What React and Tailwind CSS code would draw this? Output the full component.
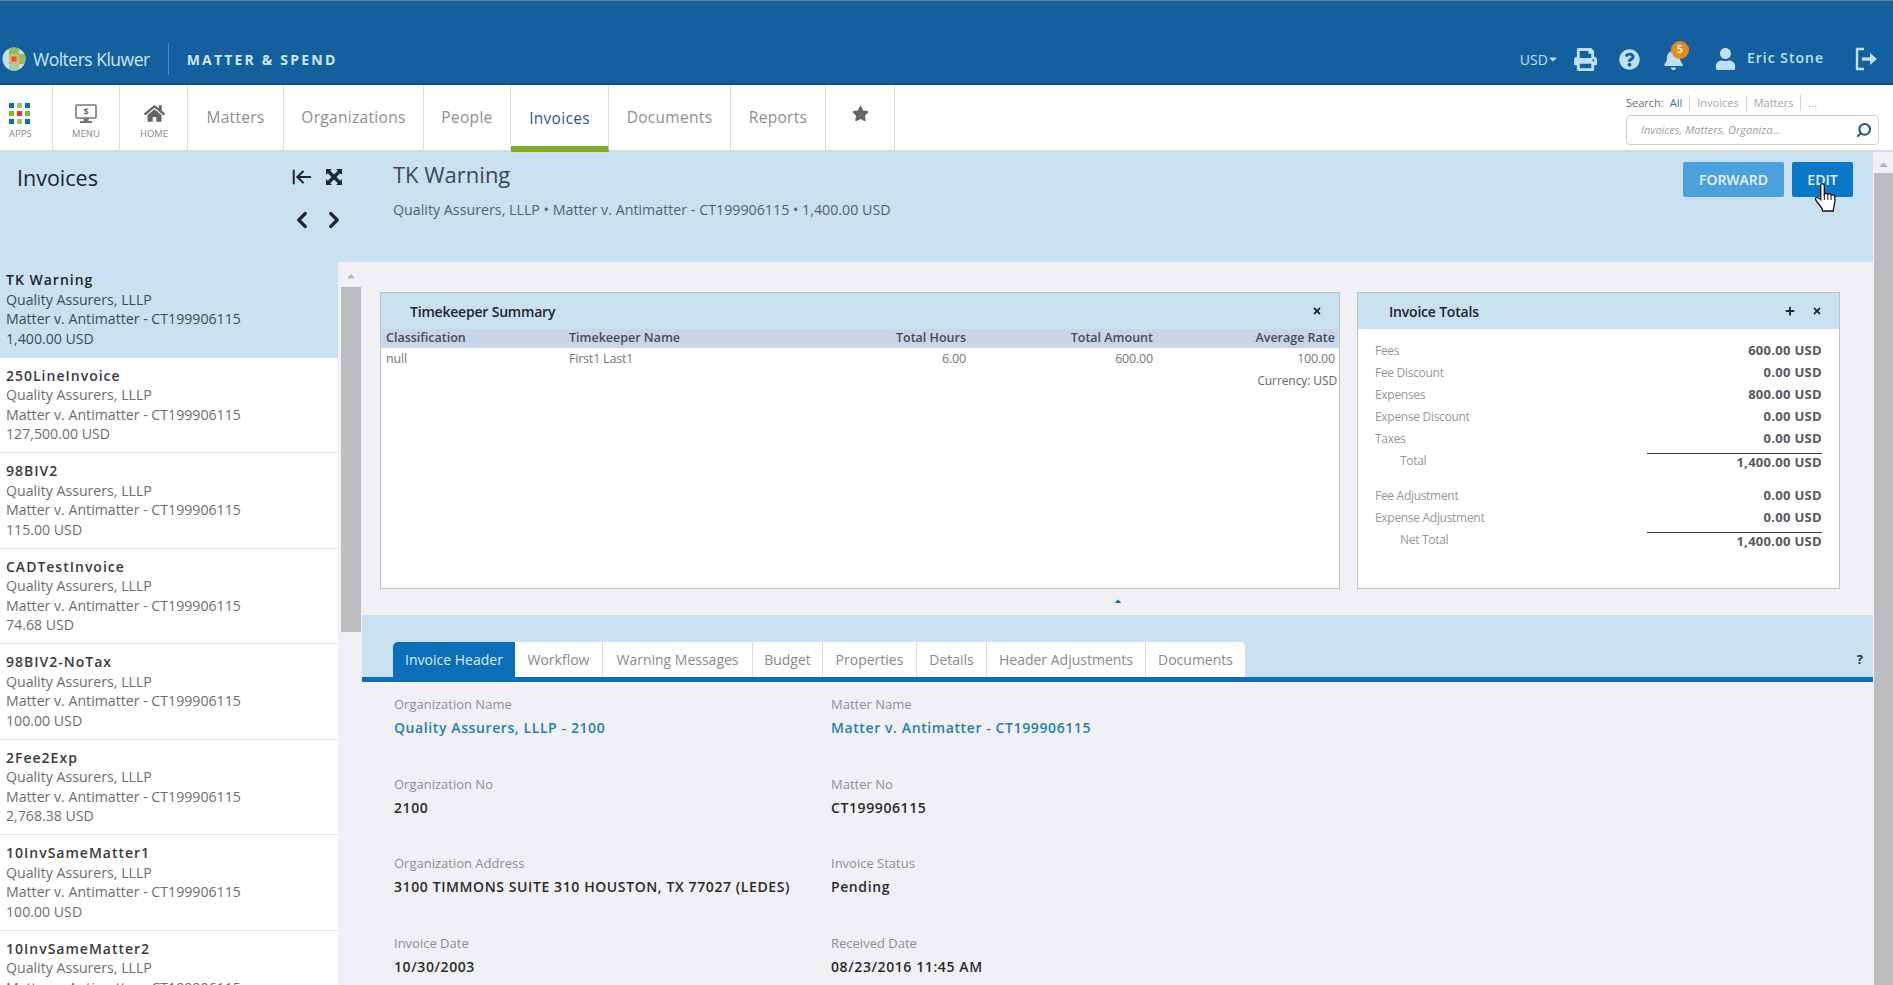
import React from 'react';
import { FaPrint, FaQuestionCircle, FaBell, FaUser, FaHome, FaStar, FaTimes, FaPlus, FaCaretDown, FaCaretUp } from 'react-icons/fa';
import { ChevronLeft, ChevronRight, ArrowLeftToLine, Search } from 'lucide-react';

const FONT = { fontFamily: '"Open Sans", sans-serif' };

const invoices = [
    ['TK Warning', '1,400.00 USD'],
    ['250LineInvoice', '127,500.00 USD'],
    ['98BIV2', '115.00 USD'],
    ['CADTestInvoice', '74.68 USD'],
    ['98BIV2-NoTax', '100.00 USD'],
    ['2Fee2Exp', '2,768.38 USD'],
    ['10InvSameMatter1', '100.00 USD'],
    ['10InvSameMatter2', '100.00 USD'],
];

const navLinks = [
    { label: 'Matters', w: 'w-[96px]' },
    { label: 'Organizations', w: 'w-[140px]' },
    { label: 'People', w: 'w-[87px]' },
    { label: 'Invoices', w: 'w-[98px]', active: true },
    { label: 'Documents', w: 'w-[122px]' },
    { label: 'Reports', w: 'w-[95px]' },
];

const tabs = [
    { label: 'Invoice Header', w: 'w-[122px]', active: true },
    { label: 'Workflow', w: 'w-[88px]' },
    { label: 'Warning Messages', w: 'w-[150px]' },
    { label: 'Budget', w: 'w-[70px]' },
    { label: 'Properties', w: 'w-[94px]' },
    { label: 'Details', w: 'w-[70px]' },
    { label: 'Header Adjustments', w: 'w-[159px]' },
    { label: 'Documents', w: 'w-[100px]' },
];

const fields = [
    ['Organization Name', 'Quality Assurers, LLLP - 2100', true],
    ['Matter Name', 'Matter v. Antimatter - CT199906115', true],
    ['Organization No', '2100'],
    ['Matter No', 'CT199906115'],
    ['Organization Address', '3100 TIMMONS SUITE 310 HOUSTON, TX 77027 (LEDES)'],
    ['Invoice Status', 'Pending'],
    ['Invoice Date', '10/30/2003'],
    ['Received Date', '08/23/2016 11:45 AM'],
];

const Logo = () => (
    <svg width="24" height="24" viewBox="0 0 24 24" className="shrink-0">
        <defs>
            <clipPath id="globe"><circle cx="12" cy="12" r="11.5" /></clipPath>
        </defs>
        <g clipPath="url(#globe)">
            <rect width="24" height="24" fill="#c3e0ea" />
            <rect x="7" y="0" width="10" height="7" fill="#93bb62" />
            <rect x="17" y="7" width="7" height="10" fill="#93bb62" />
            <rect x="7" y="17" width="10" height="7" fill="#a5cfa0" />
            <rect x="7" y="7" width="10" height="10" fill="#d9b66a" />
            <rect x="9.5" y="9.5" width="5" height="5" fill="#e0563c" />
        </g>
    </svg>
);

const AppsIcon = () => {
    const colors = ['bg-[#0a6cb4]', 'bg-[#a9bd62]', 'bg-[#0a6cb4]', 'bg-[#85b52c]', 'bg-[#e2322a]', 'bg-[#85b52c]', 'bg-[#0a6cb4]', 'bg-[#a9bd62]', 'bg-[#0a6cb4]'];
    return (
        <div className="grid grid-cols-3 gap-[3px] w-[21px] h-[21px]">
            {colors.map((c, i) => <span key={i} className={`${c} block w-[5px] h-[5px]`} />)}
        </div>
    );
};

const MenuIcon = () => (
    <svg width="22" height="20" viewBox="0 0 22 20">
        <rect x="1" y="1" width="20" height="13" rx="1" fill="#fff" stroke="#777" strokeWidth="1.6" />
        <rect x="8.5" y="14" width="5" height="3" fill="#777" />
        <rect x="5" y="17" width="12" height="2" fill="#777" />
        <text x="11" y="11" textAnchor="middle" fontSize="9" fontWeight="700" fill="#666" fontFamily="Open Sans, sans-serif">$</text>
    </svg>
);

const LogoutIcon = () => (
    <svg width="24" height="24" viewBox="0 0 24 24" fill="none" stroke="#bfe0f4" strokeWidth="2.4">
        <path d="M9 2H2v20h7" />
        <path d="M7 12h10" strokeWidth="3.4" />
        <path d="M15 6l7 6-7 6z" fill="#bfe0f4" stroke="none" />
    </svg>
);

const ExpandIcon = () => (
    <svg width="18" height="18" viewBox="0 0 18 18" fill="#1f2733">
        <path d="M1 1h6L5.2 2.8 9 6.6l3.8-3.8L11 1h6v6l-1.8-1.8L11.4 9l3.8 3.8L17 11v6h-6l1.8-1.8L9 11.4l-3.8 3.8L7 17H1v-6l1.8 1.8L6.6 9 2.8 5.2 1 7z" />
    </svg>
);

const HandCursor = () => (
    <svg width="24" height="32" viewBox="0 0 24 32" className="absolute left-[22px] top-[20px]">
        <path
            d="M7 2.5c1.300-1.500 3.300-.7 3.300 1.200V12c.8-1 3-1 3.500.3.900-.9 2.900-.7 3.300.8 1-.7 3.400-.4 3.700 1.500.4 3.100.2 6.300-.7 9.200-.5 1.700-.8 3.200-.8 5.200H8.700c-.3-2.400-1.300-3.800-3-5.700-1.500-1.700-3-3.700-4-5.400-.9-1.600.9-3.300 2.600-2.100l2.400 1.900V3.700c0-.5.100-.9.300-1.200z"
            fill="#fff"
            stroke="#111"
            strokeWidth="1.300"
        />
        <path d="M10.300 12v6M13.800 12.500V18M17.100 13.500V18" stroke="#111" strokeWidth="1" />
    </svg>
);

const TotalRow = ({ label, value, indent, total }) => (
    <div className="flex items-center justify-between h-[22px]">
        <span className={`text-[12px] tracking-[-0.3px] text-[#97979b] ${indent ? 'pl-[25px]' : ''}`}>{label}</span>
        {total ? (
            <span className="self-start mt-[3px] w-[175px] border-t border-[#333] text-right text-[13px] leading-[16px] font-bold tracking-[0.3px] text-[#58585c]">{value}</span>
        ) : (
            <span className="text-[13px] font-bold tracking-[0.3px] text-[#58585c]">{value}</span>
        )}
    </div>
);

const TopBar = () => (
    <div className="h-[85px] shrink-0 bg-[#14609f] border-t border-[#5d7f9e] border-b-2 border-b-[#0f4f86] flex items-end pb-[5px]">
        <div className="flex items-center h-[38px] pl-[2px]">
            <Logo />
            <span className="ml-[7px] text-[17.500px] tracking-[-0.5px] text-[#cfe6f5]">Wolters Kluwer</span>
            <span className="ml-[18px] h-[32px] border-l border-[#4a8abd]" />
            <span className="ml-[18px] text-[14px] font-bold tracking-[2.200px] text-[#cfe6f5]">MATTER &amp; SPEND</span>
        </div>
        <div className="ml-auto flex items-center h-[38px] text-[#bfe0f4]">
            <span className="text-[14px]">USD</span>
            <FaCaretDown className="w-[12px] h-[12px] -ml-[1px]" />
            <FaPrint className="ml-[15px] w-[23px] h-[23px]" />
            <FaQuestionCircle className="ml-[22px] w-[21px] h-[21px]" />
            <div className="relative ml-[23px]">
                <FaBell className="w-[21px] h-[21px]" />
                <span className="absolute -top-[8px] left-[8px] w-[18px] h-[18px] rounded-full bg-[#e48a1e] text-[#fff3dc] text-[11px] font-bold flex items-center justify-center">5</span>
            </div>
            <FaUser className="ml-[30px] w-[23px] h-[22px]" />
            <span className="ml-[10px] text-[14px] font-semibold tracking-[1px] -mt-[4px]">Eric Stone</span>
            <span className="ml-[31px] mr-[14px]"><LogoutIcon /></span>
        </div>
    </div>
);

const NavBar = () => (
    <div className="h-[67px] shrink-0 bg-white border-b-2 border-[#d8d9dc] flex">
        <div className="w-[53px] border-r border-[#dcdde0] pl-[9px] pt-[18px]">
            <AppsIcon />
            <span className="block w-[21px] mt-[3px] text-center text-[9.500px] text-[#8a8a8a]">APPS</span>
        </div>
        <div className="w-[67px] border-r border-[#dcdde0] flex flex-col items-center pt-[19px]">
            <MenuIcon />
            <span className="mt-[3px] text-[9.500px] text-[#8a8a8a]">MENU</span>
        </div>
        <div className="w-[68px] border-r border-[#dcdde0] flex flex-col items-center pl-[1px] pt-[18px]">
            <FaHome className="w-[21px] h-[21px] text-[#666]" />
            <span className="mt-[3px] text-[9.500px] text-[#8a8a8a]">HOME</span>
        </div>
        {navLinks.map((n) => (
            <div
                key={n.label}
                className={`${n.w} border-r border-[#dcdde0] flex items-center justify-center text-[15.500px] tracking-[0.3px] ${n.active ? 'text-[#2a5d8c] border-b-[6px] border-b-[#7fa728] pt-[6px] h-[67px]' : 'text-[#8f8f8f]'}`}
            >
                {n.label}
            </div>
        ))}
        <div className="w-[69px] border-r border-[#dcdde0] flex justify-center pt-[20px]">
            <FaStar className="w-[17px] h-[17px] text-[#666]" />
        </div>
        <div className="ml-auto w-[253px] mr-[14px]">
            <div className="flex items-center h-[30px] pt-[6px] text-[11px] text-[#a5a5a8]">
                <span className="text-[#707070]">Search:</span>
                <span className="ml-[6px] pr-[7px] border-r border-[#d5d5d8] leading-[16px] text-[#2f6ea5]">All</span>
                <span className="px-[7px] border-r border-[#d5d5d8] leading-[16px]">Invoices</span>
                <span className="px-[7px] border-r border-[#d5d5d8] leading-[16px]">Matters</span>
                <span className="pl-[7px]">...</span>
            </div>
            <div className="h-[30px] border border-[#cfd0d4] rounded-[4px] flex items-center pl-[14px] pr-[6px]">
                <span className="text-[11px] italic text-[#a0a0a4]">Invoices, Matters, Organiza...</span>
                <Search className="ml-auto w-[16px] h-[16px] text-[#20557f] -scale-x-100" strokeWidth={3} />
            </div>
        </div>
    </div>
);

const Sidebar = () => (
    <div className="w-[362px] shrink-0 flex flex-col">
        <div className="h-[110px] shrink-0 bg-[#cae1f1] flex justify-between pl-[17px] pr-[17px] pt-[11px]">
            <h2 className="text-[21.500px] leading-[30px] text-[#1c2530]">Invoices</h2>
            <div className="grid grid-cols-[22px_22px] gap-x-[10px] gap-y-[19px] justify-items-center items-center h-fit pt-[3px]">
                <ArrowLeftToLine className="w-[22px] h-[22px] text-[#1f2733]" strokeWidth={2.2} />
                <ExpandIcon />
                <ChevronLeft className="w-[26px] h-[26px] text-[#1f2733]" strokeWidth={3} />
                <ChevronRight className="w-[26px] h-[26px] text-[#1f2733]" strokeWidth={3} />
            </div>
        </div>
        <div className="flex-1 flex min-h-0">
            <div className="w-[338px] bg-white overflow-hidden">
                {invoices.map(([name, amount], i) => (
                    <div key={name} className={`h-[95.500px] pl-[6px] pt-[8px] text-[14.150px] leading-[19.500px] border-b border-[#e3e3e6] ${i === 0 ? 'bg-[#cae1f1] text-[#3d4b58]' : 'text-[#6e6e72]'}`}>
                        <div className={`font-semibold text-[14px] tracking-[1px] ${i === 0 ? 'text-[#1c2530]' : 'text-[#3a3a3e]'}`}>{name}</div>
                        <div>Quality Assurers, LLLP</div>
                        <div>Matter v. Antimatter - CT199906115</div>
                        <div>{amount}</div>
                    </div>
                ))}
            </div>
            <div className="w-[24px] bg-[#f1f1f5] flex flex-col items-center pt-[8px] pl-[1px]">
                <FaCaretUp className="w-[12px] h-[12px] text-[#b5b5b8]" />
                <div className="mt-[5px] w-[20px] h-[345px] bg-[#bdbdc0]" />
            </div>
        </div>
    </div>
);

const Main = () => (
    <div className="flex-1 flex flex-col min-w-0 bg-[#f1f1f5]">
        <div className="h-[110px] shrink-0 bg-[#cae1f1] flex justify-between pl-[31px] pr-[20px] pt-[7px]">
            <div>
                <h1 className="text-[22px] leading-[30px] text-[#3a4a58]">TK Warning</h1>
                <p className="mt-[11px] text-[14.250px] leading-[20px] text-[#55626e]">Quality Assurers, LLLP • Matter v. Antimatter - CT199906115 • 1,400.00 USD</p>
            </div>
            <div className="flex gap-[8px] h-[35px] mt-[3px]">
                <button className="w-[101px] rounded-[2px] bg-[#4ca0db] text-[14px] font-semibold text-[#e9f4fb]">FORWARD</button>
                <button className="relative w-[61px] rounded-[2px] bg-[#0a78c8] text-[14px] font-semibold text-[#e9f4fb]">
                    EDIT
                    <HandCursor />
                </button>
            </div>
        </div>

        <div className="h-[353px] shrink-0 pl-[18px] pt-[30px]">
            <div className="flex gap-[17px]">
                <div className="w-[960px] h-[297px] bg-white border border-[#bcc3ca]">
                    <div className="h-[36px] bg-[#cae1f1] flex items-center justify-between pl-[29px] pr-[17px]">
                        <span className="text-[14px] font-semibold tracking-[-0.2px] text-[#1c2530]">Timekeeper Summary</span>
                        <FaTimes className="w-[10px] h-[10px] text-[#1c2530]" />
                    </div>
                    <div className="h-[19px] bg-[#c9d6e9] grid grid-cols-[183px_200px_197px_187px_182px] items-center pl-[5px] text-[12.500px] font-semibold text-[#444c58]">
                        <span>Classification</span>
                        <span>Timekeeper Name</span>
                        <span className="text-right">Total Hours</span>
                        <span className="text-right">Total Amount</span>
                        <span className="text-right">Average Rate</span>
                    </div>
                    <div className="h-[22px] grid grid-cols-[183px_200px_197px_187px_182px] items-center pl-[5px] text-[12.500px] tracking-[-0.2px] text-[#77777b]">
                        <span>null</span>
                        <span>First1 Last1</span>
                        <span className="text-right">6.00</span>
                        <span className="text-right">600.00</span>
                        <span className="text-right">100.00</span>
                    </div>
                    <div className="pr-[2px] pt-[2px] text-right text-[12px] leading-[18px] tracking-[-0.1px] text-[#66666a]">Currency: USD</div>
                </div>
                <div className="w-[483px] h-[297px] bg-white border border-[#bcc3ca]">
                    <div className="h-[36px] bg-[#cae1f1] flex items-center pl-[31px] pr-[17px]">
                        <span className="text-[14px] font-semibold tracking-[-0.2px] text-[#1c2530]">Invoice Totals</span>
                        <FaPlus className="ml-auto w-[10px] h-[10px] text-[#1c2530]" />
                        <FaTimes className="ml-[17px] w-[10px] h-[10px] text-[#1c2530]" />
                    </div>
                    <div className="pl-[17px] pr-[17px] pt-[11px]">
                        <TotalRow label="Fees" value="600.00 USD" />
                        <TotalRow label="Fee Discount" value="0.00 USD" />
                        <TotalRow label="Expenses" value="800.00 USD" />
                        <TotalRow label="Expense Discount" value="0.00 USD" />
                        <TotalRow label="Taxes" value="0.00 USD" />
                        <TotalRow label="Total" value="1,400.00 USD" indent total />
                        <div className="h-[13px]" />
                        <TotalRow label="Fee Adjustment" value="0.00 USD" />
                        <TotalRow label="Expense Adjustment" value="0.00 USD" />
                        <TotalRow label="Net Total" value="1,400.00 USD" indent total />
                    </div>
                </div>
            </div>
            <div className="flex justify-center w-[1476px] pt-[7px]">
                <FaCaretUp className="w-[10px] h-[10px] text-[#1d6ea8]" />
            </div>
        </div>

        <div className="h-[67px] shrink-0 bg-[#cae1f1] border-b-[5px] border-[#0a6fb8] flex items-end pl-[31px] pr-[10px]">
            {tabs.map((t, i) => (
                <div
                    key={t.label}
                    className={`${t.w} h-[35px] flex items-center justify-center text-[14px] ${i === 0 ? 'rounded-tl-[5px]' : ''} ${i === tabs.length - 1 ? 'rounded-tr-[5px]' : ''} ${t.active ? 'bg-[#0a6fb8] text-[#d9edf9]' : 'bg-white text-[#8a8a8e] border-r border-[#dcdde0]'}`}
                >
                    {t.label}
                </div>
            ))}
            <span className="ml-auto mb-[8px] text-[13px] font-bold text-[#333]">?</span>
        </div>

        <div className="grid grid-cols-[437px_1fr] auto-rows-[79.500px] pl-[32px] pt-[12px]">
            {fields.map(([label, value, link]) => (
                <div key={label}>
                    <div className="text-[13px] leading-[20px] text-[#8e8e92]">{label}</div>
                    <div className={`mt-[4px] text-[14px] leading-[20px] font-semibold tracking-[0.6px] ${link ? 'text-[#1f7fb8]' : 'text-[#2a2a2e]'}`}>{value}</div>
                </div>
            ))}
        </div>
    </div>
);

const App = () => (
    <div className="h-[985px] overflow-hidden flex flex-col bg-white" style={FONT}>
        <TopBar />
        <NavBar />
        <div className="flex-1 flex min-h-0">
            <Sidebar />
            <Main />
            <div className="w-[20px] shrink-0 bg-[#f1f1f5] flex flex-col items-center pt-[6px]">
                <FaCaretUp className="w-[13px] h-[13px] text-[#b5b5b8]" />
                <div className="mt-[2px] w-full flex-1 ml-[2px] bg-[#bdbdc0]" />
            </div>
        </div>
    </div>
);

export default App;
